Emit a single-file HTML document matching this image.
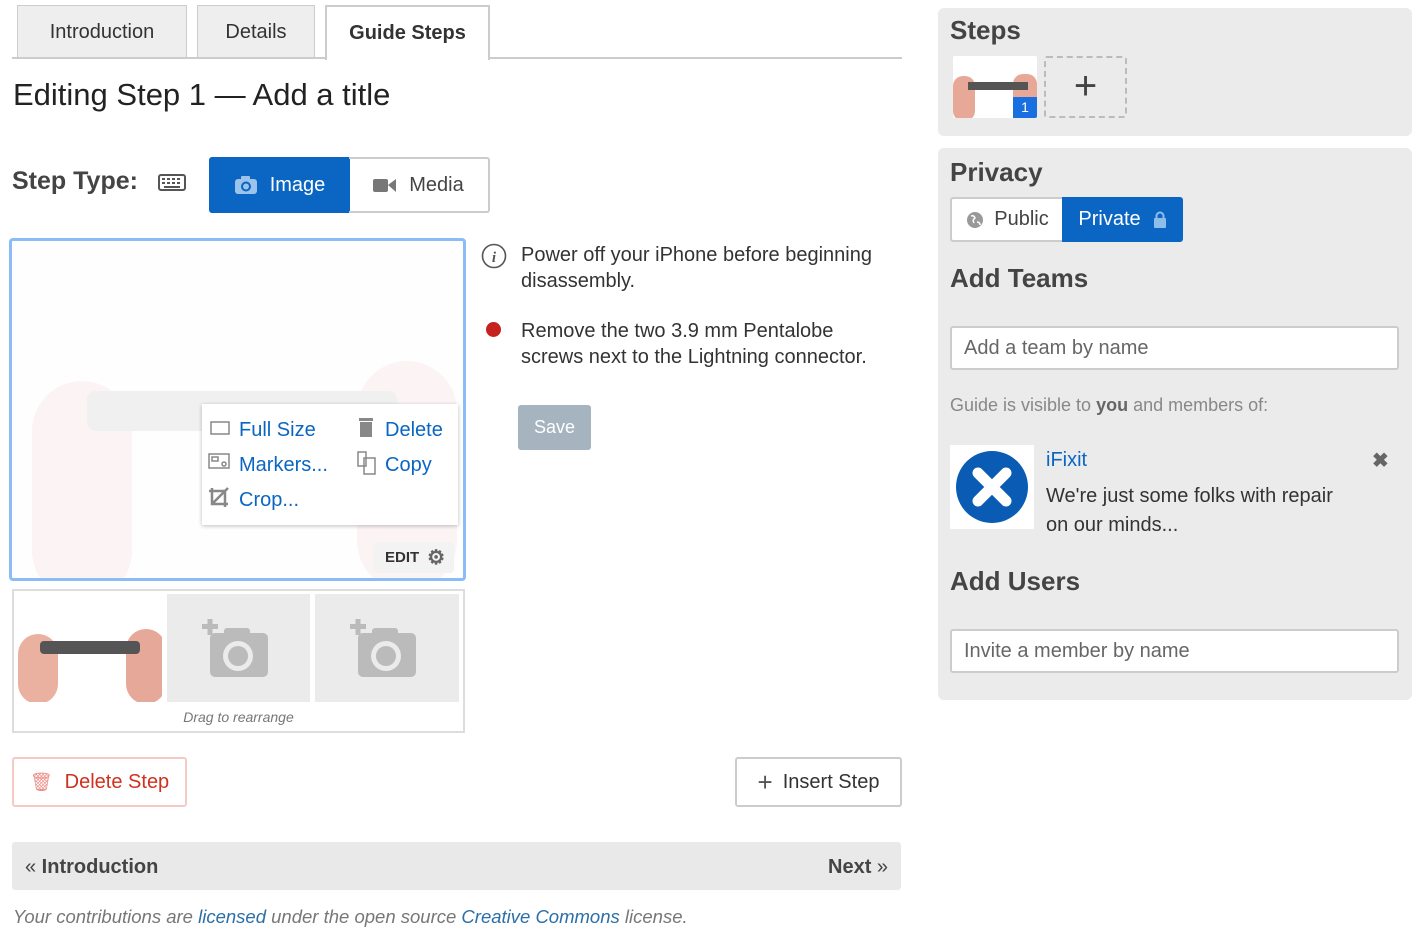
<!DOCTYPE html>
<html><head><meta charset="utf-8"><style>
*{box-sizing:border-box;margin:0;padding:0}
body{width:1421px;height:935px;background:#fff;font-family:"Liberation Sans",sans-serif;color:#333;position:relative;overflow:hidden}
.a{position:absolute}
.tab{position:absolute;top:5px;height:53px;border:1px solid #ccc;border-bottom:none;background:#eee;font-size:20px;display:flex;align-items:center;justify-content:center;color:#333}
.btn{position:absolute;display:flex;align-items:center;justify-content:center;border-radius:3px}
.blue{color:#0a66c2}
.panel{position:absolute;left:938px;width:474px;background:#ebebeb;border-radius:6px}
.h{font-size:26px;font-weight:bold;color:#444;position:absolute}
.inp{position:absolute;left:950px;width:449px;height:44px;border:2px solid #ccc;border-radius:3px;background:#fff;font-size:20px;color:#666;padding-left:12px;display:flex;align-items:center}
</style></head><body>
<div class="tab" style="left:17px;width:170px">Introduction</div>
<div class="tab" style="left:197px;width:118px">Details</div>
<div class="tab" style="left:325px;width:165px;background:#fff;border:2px solid #ccc;border-bottom:none;font-weight:bold;height:55px;z-index:2">Guide Steps</div>
<div class="a" style="left:12px;top:57px;width:890px;height:2px;background:#ccc"></div>
<div class="a" style="left:13px;top:77px;font-size:31px;color:#222">Editing Step 1 — Add a title</div>
<div class="a" style="left:12px;top:167px;font-size:25px;font-weight:bold;color:#444">Step Type:</div>
<svg class="a" style="left:158px;top:174px" width="28" height="17" viewBox="0 0 28 17"><rect x="1" y="1" width="26" height="15" rx="2" fill="none" stroke="#555" stroke-width="2"/><g fill="#555"><rect x="4" y="4" width="3" height="2"/><rect x="9" y="4" width="3" height="2"/><rect x="14" y="4" width="3" height="2"/><rect x="19" y="4" width="3" height="2"/><rect x="4" y="8" width="3" height="2"/><rect x="9" y="8" width="3" height="2"/><rect x="14" y="8" width="3" height="2"/><rect x="19" y="8" width="3" height="2"/><rect x="6" y="12" width="16" height="2"/></g></svg>
<div class="btn" style="left:209px;top:157px;width:141px;height:56px;background:#0a66c2;color:#fff;font-size:20px;border-radius:3px 0 0 3px"><svg width="24" height="18" style="margin-right:12px"><rect x="1" y="3" width="22" height="15" rx="3" fill="#9cc3ec"/><rect x="7" y="0" width="9" height="5" rx="1" fill="#9cc3ec"/><circle cx="12" cy="10.5" r="5" fill="#0a66c2"/><circle cx="12" cy="10.5" r="3" fill="#9cc3ec"/></svg>Image</div>
<div class="btn" style="left:349px;top:157px;width:141px;height:56px;border:2px solid #ccc;border-left:none;color:#444;font-size:20px;border-radius:0 3px 3px 0"><svg width="24" height="16" style="margin-right:12px"><rect x="0" y="2" width="15" height="13" rx="2" fill="#777"/><path d="M15 8 L23 2 V15 Z" fill="#777"/></svg>Media</div>

<div class="a" style="left:9px;top:238px;width:457px;height:343px;border:3px solid #8bbcf5;border-radius:4px;background:#fefefe;overflow:hidden">
<div class="a" style="left:20px;top:140px;width:100px;height:220px;background:#fcf4f4;border-radius:50px"></div>
<div class="a" style="left:345px;top:120px;width:100px;height:230px;background:#fcf4f4;border-radius:50px"></div>
<div class="a" style="left:75px;top:150px;width:310px;height:40px;background:#f0f0f0;border-radius:8px"></div>
<div class="a" style="left:190px;top:163px;width:256px;height:121px;background:#fff;box-shadow:0 1px 4px rgba(0,0,0,.25)"></div>
<div class="a" style="left:361px;top:301px;width:81px;height:31px;background:#f3f3f3;border-radius:4px;font-size:15px;font-weight:bold;color:#333;display:flex;align-items:center;padding-left:12px">EDIT <span style="color:#666;font-size:20px;margin-left:8px">⚙</span></div>
</div>
<div class="a blue" style="left:239px;top:419px;font-size:20px">Full Size</div>
<div class="a blue" style="left:239px;top:454px;font-size:20px">Markers...</div>
<div class="a blue" style="left:239px;top:489px;font-size:20px">Crop...</div>
<div class="a blue" style="left:385px;top:419px;font-size:20px">Delete</div>
<div class="a blue" style="left:385px;top:454px;font-size:20px">Copy</div>
<svg class="a" style="left:208px;top:418px" width="24" height="100" fill="none" stroke="#888" stroke-width="1.5"><rect x="3" y="4" width="18" height="12"/><rect x="1" y="36" width="20" height="14"/><rect x="4" y="39" width="6" height="4"/><circle cx="16" cy="46" r="2"/><path d="M4 70 V86 H20 M1 73 H17 V89 M4 86 L20 70" stroke-width="2.5"/></svg>
<svg class="a" style="left:355px;top:416px" width="26" height="60" fill="#888"><rect x="4" y="2" width="14" height="3"/><rect x="5" y="6" width="12" height="15"/><path d="M3 36 h8 v14 h-8z M9 42 h11 v16 h-11z" fill="none" stroke="#888" stroke-width="1.5"/></svg>

<div class="a" style="left:12px;top:589px;width:453px;height:144px;border:2px solid #ddd"></div>
<div class="a" style="left:18px;top:594px;width:144px;height:108px;background:#fff;overflow:hidden">
<div class="a" style="left:0;top:40px;width:40px;height:70px;background:#eab0a0;border-radius:20px"></div>
<div class="a" style="left:108px;top:35px;width:40px;height:75px;background:#e6a898;border-radius:20px"></div>
<div class="a" style="left:22px;top:47px;width:100px;height:13px;background:#555;border-radius:4px"></div></div>
<div class="a" style="left:167px;top:594px;width:143px;height:108px;background:#ebebeb"></div>
<div class="a" style="left:315px;top:594px;width:144px;height:108px;background:#ebebeb"></div>
<svg class="a" style="left:200px;top:618px" width="70" height="60" fill="#bbb"><rect x="2" y="6" width="16" height="5"/><rect x="7.5" y="1" width="5" height="16"/><rect x="10" y="15" width="58" height="44" rx="5"/><rect x="24" y="10" width="26" height="10" rx="3"/><circle cx="38" cy="38" r="15" fill="#ebebeb"/><circle cx="38" cy="38" r="10"/></svg>
<svg class="a" style="left:348px;top:618px" width="70" height="60" fill="#bbb"><rect x="2" y="6" width="16" height="5"/><rect x="7.5" y="1" width="5" height="16"/><rect x="10" y="15" width="58" height="44" rx="5"/><rect x="24" y="10" width="26" height="10" rx="3"/><circle cx="38" cy="38" r="15" fill="#ebebeb"/><circle cx="38" cy="38" r="10"/></svg>
<div class="a" style="left:12px;top:709px;width:453px;text-align:center;font-size:14px;font-style:italic;color:#777">Drag to rearrange</div>

<svg class="a" style="left:481px;top:243px" width="26" height="26"><circle cx="13" cy="13" r="11.5" fill="none" stroke="#555" stroke-width="1.6"/><text x="13" y="19" font-size="15" font-style="italic" font-weight="bold" text-anchor="middle" fill="#555" font-family="Liberation Serif">i</text></svg>
<div class="a" style="left:521px;top:242px;font-size:20px;line-height:26px;color:#333;width:380px">Power off your iPhone before beginning disassembly.</div>
<div class="a" style="left:486px;top:322px;width:15px;height:15px;border-radius:50%;background:#c5221f"></div>
<div class="a" style="left:521px;top:318px;font-size:20px;line-height:26px;color:#333;width:380px">Remove the two 3.9 mm Pentalobe screws next to the Lightning connector.</div>
<div class="btn" style="left:518px;top:405px;width:73px;height:45px;background:#a6b4c0;color:#fff;font-size:18px">Save</div>

<div class="btn" style="left:12px;top:757px;width:175px;height:50px;border:2px solid #f5c9c6;color:#d0311e;font-size:20px"><span style="font-size:18px;color:#ec8d85;margin-right:12px">🗑</span>Delete Step</div>
<div class="btn" style="left:735px;top:757px;width:167px;height:50px;border:2px solid #ccc;color:#333;font-size:20px"><span style="font-size:26px;color:#555;margin-right:10px">+</span>Insert Step</div>
<div class="a" style="left:12px;top:842px;width:889px;height:48px;background:#e9e9e9;border-radius:3px"></div>
<div class="a" style="left:25px;top:856px;font-size:20px;font-weight:bold;color:#444"><span style="font-weight:normal">«</span> Introduction</div>
<div class="a" style="left:828px;top:856px;font-size:20px;font-weight:bold;color:#444">Next <span style="font-weight:normal">»</span></div>
<div class="a" style="left:13px;top:906px;font-size:18.5px;font-style:italic;color:#777">Your contributions are <span style="color:#2a6fa8">licensed</span> under the open source <span style="color:#2a6fa8">Creative Commons</span> license.</div>

<div class="panel" style="top:8px;height:128px"></div>
<div class="h" style="left:950px;top:15px">Steps</div>
<div class="a" style="left:953px;top:56px;width:84px;height:62px;background:#fff;overflow:hidden;border-radius:2px"><div class="a" style="left:0;top:20px;width:22px;height:45px;background:#e8a898;border-radius:10px"></div><div class="a" style="left:60px;top:18px;width:24px;height:45px;background:#e8a898;border-radius:10px"></div><div class="a" style="left:15px;top:26px;width:60px;height:8px;background:#555"></div><div class="a" style="left:60px;top:41px;width:24px;height:21px;background:#1a6fe0;color:#fff;font-size:14px;text-align:center;line-height:21px">1</div></div>
<div class="a" style="left:1044px;top:56px;width:83px;height:62px;border:2px dashed #bbb;border-radius:3px;text-align:center;font-size:40px;line-height:56px;color:#444;font-weight:300">+</div>

<div class="panel" style="top:148px;height:552px"></div>
<div class="h" style="left:950px;top:157px">Privacy</div>
<div class="btn" style="left:950px;top:197px;width:113px;height:45px;border:2px solid #ccc;border-right:none;background:#fff;color:#444;font-size:20px;border-radius:3px 0 0 3px"><svg width="18" height="18" style="margin-right:10px"><circle cx="9" cy="9" r="8" fill="#999"/><path d="M5 5 q3 -1 4 2 q-3 2 -1 5 M11 11 q3 0 3 3" stroke="#fff" stroke-width="1.5" fill="none"/></svg>Public</div>
<div class="btn" style="left:1062px;top:197px;width:121px;height:45px;background:#0a66c2;color:#fff;font-size:20px;border-radius:0 3px 3px 0">Private <svg width="14" height="18" style="margin-left:12px"><rect x="1" y="7" width="12" height="10" rx="1" fill="#8fbde9"/><path d="M3.5 8 V5 a3.5 3.5 0 0 1 7 0 V8" fill="none" stroke="#8fbde9" stroke-width="2"/></svg></div>
<div class="h" style="left:950px;top:263px">Add Teams</div>
<div class="inp" style="top:326px">Add a team by name</div>
<div class="a" style="left:950px;top:395px;font-size:18px;color:#888">Guide is visible to <b style="color:#666">you</b> and members of:</div>
<div class="a" style="left:950px;top:445px;width:84px;height:84px;background:#fff"><svg width="84" height="84"><circle cx="42" cy="42" r="36" fill="#0a5bb3"/><path d="M28 28 L56 56 M56 28 L28 56" stroke="#fff" stroke-width="11" stroke-linecap="round"/></svg></div>
<div class="a blue" style="left:1046px;top:449px;font-size:20px">iFixit</div>
<div class="a" style="left:1372px;top:448px;font-size:20px;color:#666;font-weight:bold">✖</div>
<div class="a" style="left:1046px;top:482px;font-size:20px;line-height:29px;color:#333;width:310px">We're just some folks with repair on our minds...</div>
<div class="h" style="left:950px;top:566px">Add Users</div>
<div class="inp" style="top:629px">Invite a member by name</div>
</body></html>
